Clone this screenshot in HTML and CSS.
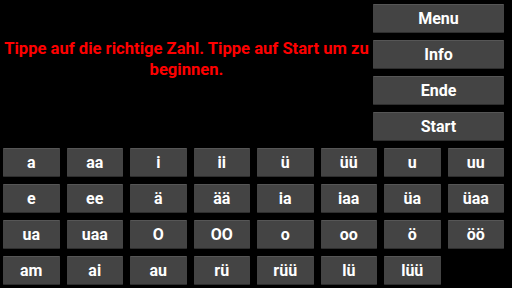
FILE: index.html
```html
<!DOCTYPE html>
<html>
  <head>
    <link rel="stylesheet" href="styles.css">
  </head>
  <body>
    <div class="screen">
      <div class="top">
        <div class="hint">Tippe auf die richtige Zahl. Tippe auf Start um zu beginnen.</div>
        <div class="menu">
          <div class="btn">Menu</div>
          <div class="btn">Info</div>
          <div class="btn">Ende</div>
          <div class="btn">Start</div>
        </div>
      </div>
      <div class="keys">
        <div class="btn">a</div>
        <div class="btn">aa</div>
        <div class="btn">i</div>
        <div class="btn">ii</div>
        <div class="btn">ü</div>
        <div class="btn">üü</div>
        <div class="btn">u</div>
        <div class="btn">uu</div>
        <div class="btn">e</div>
        <div class="btn">ee</div>
        <div class="btn">ä</div>
        <div class="btn">ää</div>
        <div class="btn">ia</div>
        <div class="btn">iaa</div>
        <div class="btn">üa</div>
        <div class="btn">üaa</div>
        <div class="btn">ua</div>
        <div class="btn">uaa</div>
        <div class="btn">O</div>
        <div class="btn">OO</div>
        <div class="btn">o</div>
        <div class="btn">oo</div>
        <div class="btn">ö</div>
        <div class="btn">öö</div>
        <div class="btn">am</div>
        <div class="btn">ai</div>
        <div class="btn">au</div>
        <div class="btn">rü</div>
        <div class="btn">rüü</div>
        <div class="btn">lü</div>
        <div class="btn">lüü</div>
      </div>
    </div>
  </body>
</html>
```

FILE: styles.css
```css
body {
  margin: 0;
  background: #000;
  font-family: Roboto, "Liberation Sans", sans-serif;
  overflow: hidden;
}

.screen {
  width: 512px;
  height: 288px;
  display: flex;
  flex-direction: column;
}

.top {
  display: flex;
  padding-top: 4px;
}

.hint {
  flex: 1;
  color: #f00;
  font-size: 16.6px;
  font-weight: bold;
  line-height: 21px;
  text-align: center;
  padding-top: 34px;
}

.menu {
  width: 131px;
  margin-right: 8px;
  display: flex;
  flex-direction: column;
  gap: 7px;
}

.btn {
  height: 29px;
  box-sizing: border-box;
  background: #444;
  border-top: 1px solid #565656;
  border-bottom: 1px solid #2e2e2e;
  border-radius: 1px;
  color: #fff;
  font-size: 16px;
  font-weight: bold;
  display: flex;
  align-items: center;
  justify-content: center;
}

.keys {
  display: grid;
  grid-template-columns: repeat(8, 1fr);
  gap: 7px;
  padding: 7px 8px 0 3px;
}
```
